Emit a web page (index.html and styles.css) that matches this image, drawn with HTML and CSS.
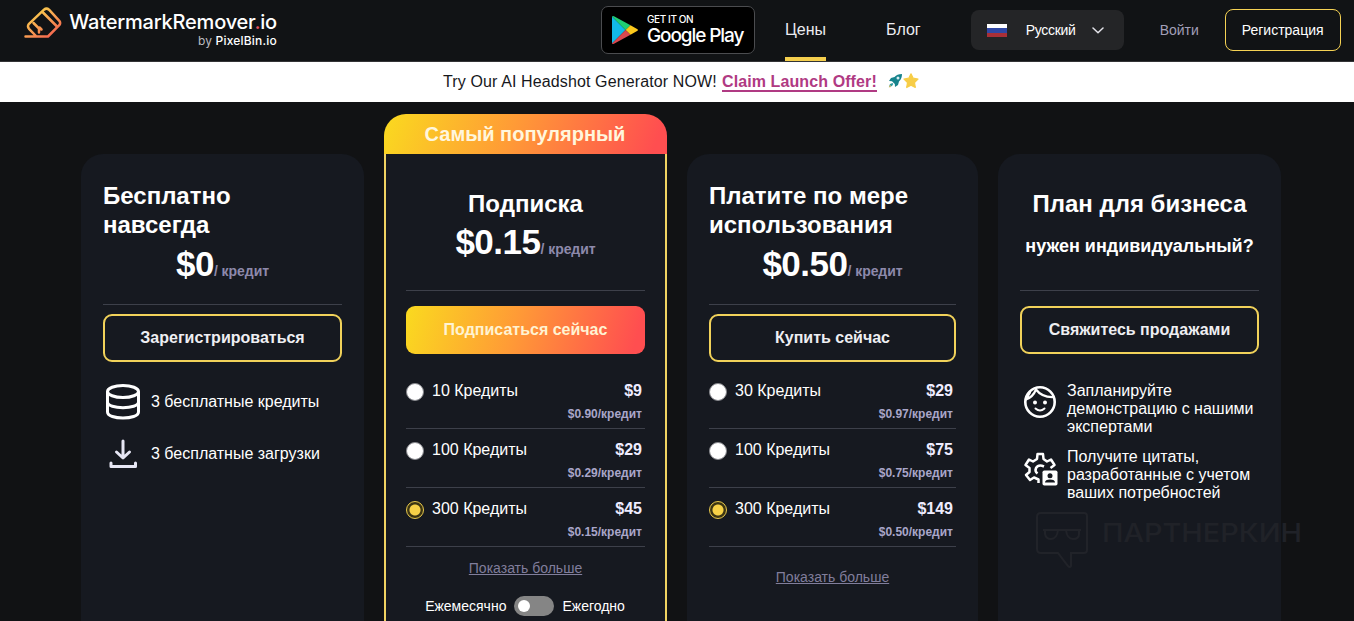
FILE: index.html
```html
<!DOCTYPE html>
<html lang="ru">
<head>
<meta charset="utf-8">
<title>WatermarkRemover.io</title>
<link rel="stylesheet" href="styles.css">
</head>
<body>
<header class="header">
  <a class="logo">
    <svg class="logo-mark" width="38" height="34" viewBox="0 0 38 34" fill="none" stroke="url(#lg)" stroke-width="2.5" stroke-linecap="round" stroke-linejoin="round">
      <defs><linearGradient id="lg" x1="8" y1="2" x2="28" y2="32" gradientUnits="userSpaceOnUse"><stop stop-color="#f7d84a"/><stop offset=".5" stop-color="#f9a352"/><stop offset="1" stop-color="#f4604f"/></linearGradient></defs>
      <path d="M1.500 30.500H24L35.300 19.200Q37 17 35.300 14.800L25 3.700Q22.500 1.500 20 3.700L5 17.800Q3 20.300 5 22.800L12 30"/>
      <path d="M18.500 6L33 20.500M9.500 17L15 22.500V26.500M15.500 21.500L17.500 23.500"/>
    </svg>
    <span class="logo-text"><span class="logo-name">WatermarkRemover<i>.</i>io</span><span class="logo-by"><em>by</em> PixelBin.io</span></span>
  </a>
  <a class="play">
    <svg width="28" height="30" viewBox="0 0 28 30">
      <path d="M1 1.500V28.500L14.500 15Z" fill="#12b9e8"/>
      <path d="M1 1.500L14.500 15L19.500 10.300L3 1.200Q1.500.5 1 1.500Z" fill="#1fce73"/>
      <path d="M19.500 10.300L26.500 14.200Q27.500 15 26.500 15.800L19.500 19.700L14.500 15Z" fill="#fbc81c"/>
      <path d="M14.500 15L19.500 19.700L3 28.800Q1.500 29.500 1 28.500Z" fill="#d9484f"/>
    </svg>
    <span class="play-text"><small>GET IT ON</small><b>Google Play</b></span>
  </a>
  <nav class="nav"><a class="nav-link active">Цены</a><a class="nav-link">Блог</a></nav>
  <div class="lang"><span class="flag"></span><span class="lang-name">Русский</span>
    <svg width="12" height="7" viewBox="0 0 12 7" fill="none" stroke="#e4e4ea" stroke-width="1.500" stroke-linecap="round" stroke-linejoin="round"><path d="M1 1L6 5.700L11 1"/></svg>
  </div>
  <a class="login">Войти</a>
  <a class="register">Регистрация</a>
</header>
<div class="banner">
  <span class="banner-text">Try Our AI Headshot Generator NOW!</span>
  <a class="banner-link">Claim Launch Offer!</a>
  <svg class="emoji" width="31" height="16" viewBox="0 0 31 16">
    <path d="M14 1Q9 1 6.500 4L3 5L1 8L4 8.300L6.800 11L7 14L10 12L11 8.500Q14 6 14 1Z" fill="#16838c"/>
    <path d="M4.500 10L2 11L.8 14.200L4 13L5.300 11Z" fill="#2c9aa0"/><path d="M1 13L3 12L2 15Z" fill="#e8bd55"/>
    <circle cx="10" cy="5" r="1.500" fill="#d9eef2"/>
    <path d="M23 .8L25.200 5.200L30 6L26.500 9.500L27.300 14.500L23 12.200L18.700 14.500L19.500 9.500L16 6L20.800 5.200Z" fill="#f7cd47" stroke="#f7cd47" stroke-width="1.200" stroke-linejoin="round"/>
  </svg>
</div>
<main class="plans">
  <section class="card">
    <div class="head tall">
      <h2 class="title left">Бесплатно<br>навсегда</h2>
      <p class="price"><b>$0</b><span>/ кредит</span></p>
    </div>
    <a class="btn">Зарегистрироваться</a>
    <ul class="features">
      <li><svg width="40" height="40" viewBox="0 0 40 40" fill="none" stroke="#fff" stroke-width="3"><ellipse cx="20" cy="9.500" rx="15.500" ry="6"/><path d="M4.500 9.500V30C4.500 38 35.500 38 35.500 30V9.500M4.500 20C4.500 27.500 35.500 27.500 35.500 20"/></svg><span class="feature-text">3 бесплатные кредиты</span></li>
      <li><svg width="40" height="40" viewBox="0 0 40 40" fill="none" stroke="#e6e6f4" stroke-width="3" stroke-linecap="round" stroke-linejoin="round"><path d="M20 7V23.500M13.500 18L20 24L26.500 18"/><path d="M8 29V32.500H32.500V29"/></svg><span class="feature-text">3 бесплатные загрузки</span></li>
    </ul>
  </section>
  <div class="popular">
    <div class="ribbon"><span>Самый популярный</span></div>
    <section class="card highlighted">
      <div class="head">
        <h2 class="title">Подписка</h2>
        <p class="price"><b>$0.15</b><span>/ кредит</span></p>
      </div>
      <a class="btn solid">Подписаться сейчас</a>
      <div class="options">
        <div class="option"><i class="radio"></i><span class="name">10 Кредиты</span><span class="cost"><b>$9</b><small>$0.90/кредит</small></span></div>
        <div class="option"><i class="radio"></i><span class="name">100 Кредиты</span><span class="cost"><b>$29</b><small>$0.29/кредит</small></span></div>
        <div class="option"><i class="radio on"></i><span class="name">300 Кредиты</span><span class="cost"><b>$45</b><small>$0.15/кредит</small></span></div>
      </div>
      <a class="more">Показать больше</a>
      <div class="period"><span>Ежемесячно</span><i class="switch"></i><span>Ежегодно</span></div>
    </section>
  </div>
  <section class="card">
    <div class="head tall">
      <h2 class="title left">Платите по мере<br>использования</h2>
      <p class="price"><b>$0.50</b><span>/ кредит</span></p>
    </div>
    <a class="btn">Купить сейчас</a>
    <div class="options low">
      <div class="option"><i class="radio"></i><span class="name">30 Кредиты</span><span class="cost"><b>$29</b><small>$0.97/кредит</small></span></div>
      <div class="option"><i class="radio"></i><span class="name">100 Кредиты</span><span class="cost"><b>$75</b><small>$0.75/кредит</small></span></div>
      <div class="option"><i class="radio on"></i><span class="name">300 Кредиты</span><span class="cost"><b>$149</b><small>$0.50/кредит</small></span></div>
    </div>
    <a class="more spaced">Показать больше</a>
  </section>
  <section class="card">
    <div class="head">
      <h2 class="title">План для бизнеса</h2>
      <p class="custom">нужен индивидуальный?</p>
    </div>
    <a class="btn">Свяжитесь продажами</a>
    <ul class="features business">
      <li><svg width="40" height="40" viewBox="0 0 40 40" fill="none" stroke="#fff" stroke-width="2.600" stroke-linecap="round"><circle cx="20" cy="20" r="14.700"/><path d="M6 17.500Q13 15 16 7.500Q22 15.500 33.500 15M10 10.500Q8 13 7.500 16" stroke-width="2.200"/><path d="M15.500 26.500Q20 30.500 24.500 26.500" stroke-width="2"/><g fill="#fff" stroke="none"><circle cx="15" cy="20.500" r="2"/><circle cx="25" cy="20.500" r="2"/></g></svg><span class="feature-text">Запланируйте<br>демонстрацию с нашими<br>экспертами</span></li>
      <li><svg width="40" height="40" viewBox="0 0 40 40" fill="none" stroke="#fff" stroke-width="2.500" stroke-linejoin="round"><path d="M18.500 35V31.500L14 29.500L10 32L6 27L9.500 24V20L5.500 17L9 11.500L13 13.500L17 11L17.500 6H23L23.500 11L27 13.500L31 11.500L34.500 17L30.500 20"/><path d="M17.500 25.500Q14.500 23 16 20Q18.500 16 24 18.500"/><rect x="22.500" y="22.500" width="15" height="15" rx="1.800" fill="#fff" stroke="none"/><g fill="#161920" stroke="none"><circle cx="30" cy="27.700" r="2.500"/><path d="M25 34.500Q25 31.500 30 31.500Q35 31.500 35 34.500Z"/></g></svg><span class="feature-text">Получите цитаты,<br>разработанные с учетом<br>ваших потребностей</span></li>
    </ul>
  </section>
</main>
<svg class="watermark" width="270" height="60" viewBox="0 0 270 60" fill="none" stroke="#212329" stroke-width="2">
  <path d="M5 2H48Q51 2 51 5V39Q51 42 48 42H35V55Q34 57 32 55L22 42H5Q1 42 1 38V6Q1 2 5 2Z"/>
  <path d="M7 19H45M9 19V23Q10 28 15 28Q21 28 22 19M30 19Q31 28 37 28Q43 28 43 23V19"/>
  <text x="66" y="31" textLength="200" lengthAdjust="spacingAndGlyphs" fill="#202228" stroke="none">ПАРТНЕРКИН</text>
</svg>
</body>
</html>
```
FILE: styles.css
```css
* { box-sizing: border-box; margin: 0; padding: 0; }
html, body { height: 100%; }
body {
  position: relative;
  overflow: hidden;
  background: #111214;
  color: #fff;
  font-family: "Liberation Sans", Arial, sans-serif;
  font-size: 16px;
}
i, em { font-style: normal; }
ul { list-style: none; }
svg { display: block; flex: none; }

.header {
  display: flex;
  align-items: flex-start;
  height: 62px;
  padding-left: 24px;
  background: #111315;
  border-bottom: 1px solid #333436;
}
.logo { display: flex; width: 577px; padding-top: 6px; }
.logo-mark { margin-right: 7px; }
.logo-text {
  display: flex; flex-direction: column; align-items: flex-end;
  width: 208px; padding-top: 5px;
  font-family: Inter, sans-serif; white-space: nowrap;
}
.logo-name { font-size: 20px; line-height: 23px; font-weight: 500; letter-spacing: -.2px; }
.logo-name i { color: #e8505b; }
.logo-by { font-size: 12px; line-height: 14px; font-weight: 500; letter-spacing: .2px; }
.logo-by em { color: #b9bac0; font-weight: 400; }

.play {
  display: flex; align-items: center;
  width: 154px; height: 48px; margin-top: 6px; padding-left: 9px;
  background: #000; border: 1px solid #4b4c4f; border-radius: 7px;
}
.play-text { display: flex; flex-direction: column; margin-left: 8px; white-space: nowrap; }
.play-text small { font: 500 10px/11px Inter, sans-serif; letter-spacing: -.4px; }
.play-text b { font: 500 19px/22px Inter, sans-serif; letter-spacing: -1.1px; }

.nav { display: flex; align-self: stretch; gap: 60px; margin-left: 30px; }
.nav-link { height: 61px; padding-top: 20px; line-height: 19px; color: #ececf0; font-size: 16px; }
.nav-link.active { border-bottom: 4px solid #f5cf4d; }

.lang {
  display: flex; align-items: center;
  width: 153px; height: 40px; margin: 10px 0 0 50px; padding-left: 16px;
  background: #242527; border-radius: 8px;
}
.flag { width: 20px; height: 13px; background: linear-gradient(#fff 0 33%, #3048a5 33% 66%, #a93038 66%); }
.lang-name { width: 72px; margin-left: 19px; font-size: 14px; letter-spacing: -.3px; }
.lang-name + svg { margin-top: 1px; margin-left: -6px; }
.login { width: 65px; margin-left: 36px; padding-top: 21px; color: #a29fb8; font-size: 14px; line-height: 18px; }
.register {
  width: 116px; height: 42px; margin-top: 9px;
  border: 1px solid #f5d254; border-radius: 8px;
  font-size: 14px; line-height: 40px; text-align: center; white-space: nowrap;
}

.banner {
  display: flex; align-items: flex-start;
  height: 40px; padding: 10px 0 0 443px;
  background: #fff; color: #17181c; line-height: 20px; white-space: nowrap;
}
.banner-text { width: 279px; letter-spacing: .12px; }
.banner-link { width: 155px; height: 20px; color: #b03a83; border-bottom: 2px solid #b03a83; font-weight: 700; letter-spacing: .1px; }
.emoji { margin: 1px 0 0 11px; }

.plans { display: grid; grid-template-columns: 283px 283px 291px 283px; gap: 20px; padding-left: 81px; height: 519px; }
.card { min-width: 0; margin-top: 52px; padding: 0 22px; background: #161920; border-radius: 22px 22px 0 0; }
.popular { display: flex; flex-direction: column; padding-top: 12px; }
.ribbon {
  height: 40px; border-radius: 22px 22px 0 0;
  background: linear-gradient(110deg, #fada1f 0%, #ff9b36 45%, #ff4e50 95%);
  color: #fff6dd; font-size: 20px; font-weight: 700; line-height: 40px; text-align: center;
}
.ribbon span { margin-right: 1px; }
.highlighted { flex: 1; margin: 0; padding: 0 20px; border: solid #f0d261; border-width: 0 2px; border-radius: 0; }

.head { height: 137px; padding-top: 35px; border-bottom: 1px solid #3d404a; }
.head.tall { height: 151px; padding-top: 27px; }
.title { font-size: 24px; line-height: 29px; text-align: center; white-space: nowrap; letter-spacing: 0; }
.title.left { text-align: left; }
.price { display: flex; justify-content: center; align-items: baseline; height: 48px; line-height: 48px; }
.tall .price { margin-top: 1px; }
.price b { font-size: 35px; letter-spacing: -.5px; }
.price span { color: #8d89ab; font-size: 14px; font-weight: 700; letter-spacing: -.05px; }
.custom { margin-top: 18px; font-size: 18px; line-height: 20px; font-weight: 700; text-align: center; white-space: nowrap; }

.btn {
  display: block; height: 48px; margin-top: 15px;
  border: 2px solid #f1d25a; border-radius: 9px;
  color: #eeeef2; font-size: 16px; font-weight: 700; line-height: 43px; text-align: center;
}
.tall + .btn { margin-top: 9px; }
.btn.solid { border: 0; line-height: 47px; color: #fff3d2; background: linear-gradient(105deg, #fada1f 0%, #ff9b36 45%, #ff4e50 95%); }

.features { display: grid; gap: 12px; padding-top: 20px; }
.features li { display: flex; align-items: center; height: 40px; }
.feature-text { margin-left: 8px; font-size: 16px; line-height: 18px; white-space: nowrap; }
.business { gap: 12px; padding-top: 28px; }
.business li { align-items: flex-start; height: 54px; }
.business .feature-text { margin-left: 7px; }

.options { padding-top: 16px; }
.options.low { padding-top: 8px; }
.option { display: flex; height: 59px; border-bottom: 1px solid #3d404a; }
.radio { width: 18px; height: 18px; margin-top: 13px; border-radius: 50%; background: #fff; border: 1px solid #85868b; }
.radio.on { background: radial-gradient(circle, #f8d247 0 5px, #3c3513 6px); border-color: #e9c94b; }
.name { flex: 1; margin-left: 8px; padding-top: 11px; line-height: 20px; }
.cost { display: flex; flex-direction: column; align-items: flex-end; padding: 11px 3px 0 0; color: #eeecff; }
.cost b { line-height: 20px; }
.cost small { padding-top: 6px; font-size: 12px; font-weight: 700; line-height: 15px; color: #a9a6c9; }
.more { display: block; margin-top: 12px; color: #817e9c; font-size: 14px; line-height: 18px; text-align: center; text-decoration: underline; }
.more.spaced { margin-top: 21px; }
.period { display: flex; align-items: center; justify-content: center; gap: 8px; margin: 19px 1px 0 0; height: 20px; font-size: 14px; }
.switch { width: 40px; height: 20px; padding: 4px; border-radius: 10px; background: #858585; }
.switch::before { content: ""; display: block; width: 12px; height: 12px; border-radius: 50%; background: #fff; }

.watermark { position: absolute; left: 1036px; top: 511px; font: 500 25px Inter, sans-serif; }
```
